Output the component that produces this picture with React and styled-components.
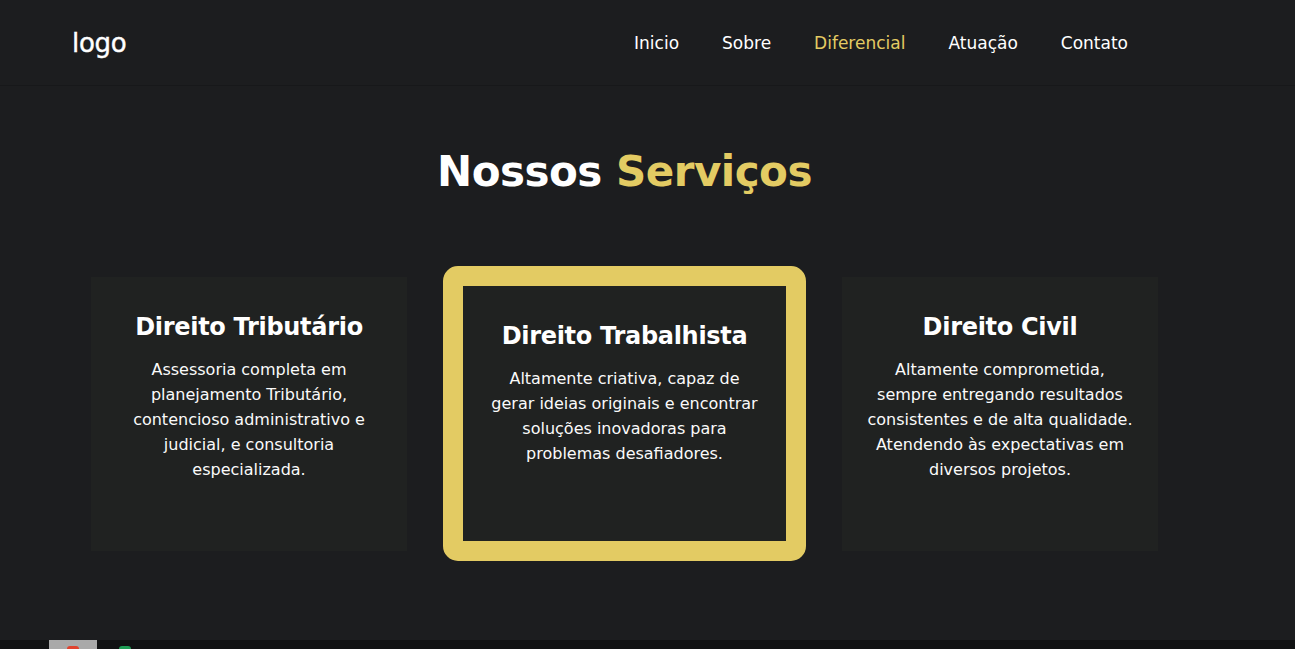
import React from 'react';
import styled, { createGlobalStyle } from 'styled-components';

const gold = '#e3cb63';
const bg = '#1c1d1f';
const cardBg = '#202221';

const Global = createGlobalStyle`
  html, body {
    margin: 0;
    padding: 0;
    background: ${bg};
    overflow: hidden;
  }
  * { box-sizing: border-box; }
`;

const Page = styled.div`
  height: 649px;
  display: flex;
  flex-direction: column;
  font-family: "DejaVu Sans", "Noto Sans", sans-serif;
  color: #fff;
`;

const Header = styled.header`
  height: 86px;
  flex-shrink: 0;
  display: flex;
  align-items: center;
  justify-content: space-between;
  padding: 0 167px 0 72px;
  border-bottom: 1px solid #17181a;
`;

const Logo = styled.div`
  font-size: 26px;
  font-weight: 500;
  letter-spacing: -0.3px;
  -webkit-text-stroke: 0.4px #fff;
`;

const Nav = styled.nav`
  display: flex;
  gap: 43px;
`;

const NavLink = styled.a`
  font-size: 17px;
  color: ${({ active }) => (active ? gold : '#fff')};
  text-decoration: none;
`;

const Section = styled.main`
  flex: 1;
  display: flex;
  flex-direction: column;
  align-items: center;
  padding-right: 46px;
`;

const Title = styled.h2`
  margin: 54px 0 0;
  font-size: 42px;
  font-weight: 700;
  line-height: 64px;
  letter-spacing: -0.5px;
`;

const Accent = styled.span`
  color: ${gold};
`;

const Cards = styled.div`
  margin-top: 62px;
  display: flex;
  align-items: center;
  gap: 36px;
`;

const Card = styled.div`
  width: ${({ featured }) => (featured ? 363 : 316)}px;
  height: ${({ featured }) => (featured ? 295 : 274)}px;
  background: ${cardBg};
  border: ${({ featured }) => (featured ? `20px solid ${gold}` : 'none')};
  border-radius: ${({ featured }) => (featured ? 15 : 0)}px;
  padding: ${({ featured }) => (featured ? '34px 8px 0' : '34px 16px 0')};
  text-align: center;
`;

const CardTitle = styled.h3`
  margin: 0;
  font-size: 24px;
  font-weight: 700;
  line-height: 32px;
  letter-spacing: -0.3px;
`;

const CardText = styled.p`
  margin: 14px 0 0;
  font-size: 16px;
  line-height: 25px;
  color: #fafafa;
  white-space: nowrap;
`;

const Taskbar = styled.div`
  height: 9px;
  flex-shrink: 0;
  background: #111213;
  display: flex;
  align-items: flex-end;
  padding-left: 49px;
  gap: 22px;
`;

const TaskItem = styled.div`
  width: 48px;
  height: 9px;
  background: #a9a9a9;
  display: flex;
  justify-content: center;
  align-items: flex-end;
`;

const Dot = styled.div`
  width: 12px;
  height: 3px;
  border-radius: 6px 6px 0 0;
  background: ${({ color }) => color};
`;

const services = [
  {
    title: 'Direito Tributário',
    lines: ['Assessoria completa em', 'planejamento Tributário,', 'contencioso administrativo e', 'judicial, e consultoria', 'especializada.'],
  },
  {
    title: 'Direito Trabalhista',
    featured: true,
    lines: ['Altamente criativa, capaz de', 'gerar ideias originais e encontrar', 'soluções inovadoras para', 'problemas desafiadores.'],
  },
  {
    title: 'Direito Civil',
    lines: ['Altamente comprometida,', 'sempre entregando resultados', 'consistentes e de alta qualidade.', 'Atendendo às expectativas em', 'diversos projetos.'],
  },
];

const links = ['Inicio', 'Sobre', 'Diferencial', 'Atuação', 'Contato'];

export default function App() {
  return (
    <Page>
      <Global />
      <Header>
        <Logo>logo</Logo>
        <Nav>
          {links.map((l) => (
            <NavLink key={l} href="#" active={l === 'Diferencial' ? 1 : 0}>
              {l}
            </NavLink>
          ))}
        </Nav>
      </Header>
      <Section>
        <Title>
          Nossos <Accent>Serviços</Accent>
        </Title>
        <Cards>
          {services.map((s) => (
            <Card key={s.title} featured={s.featured ? 1 : 0}>
              <CardTitle>{s.title}</CardTitle>
              <CardText>
                {s.lines.map((line, i) => (
                  <React.Fragment key={i}>
                    {line}
                    {i < s.lines.length - 1 && <br />}
                  </React.Fragment>
                ))}
              </CardText>
            </Card>
          ))}
        </Cards>
      </Section>
      <Taskbar>
        <TaskItem>
          <Dot color="#e0432f" />
        </TaskItem>
        <Dot color="#1f9d55" />
      </Taskbar>
    </Page>
  );
}
